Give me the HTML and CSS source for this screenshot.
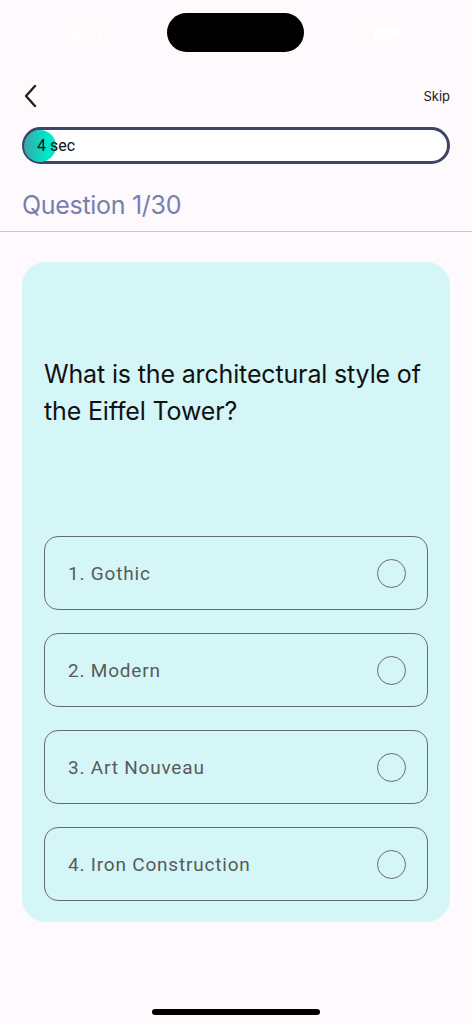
FILE: index.html
```html
<!DOCTYPE html>
<html lang="en">
<head>
  <meta charset="UTF-8">
  <meta name="viewport" content="width=device-width, initial-scale=1.0">
  <title>Quiz</title>
  <link rel="stylesheet" href="styles.css">
</head>
<body>
  <div class="status-bar">
    <span class="time">6:21</span>
    <div class="island"></div>
    <div class="status-icons">
      <svg width="16" height="12" viewBox="0 0 16 12"><path d="M1 4.5a10 10 0 0 1 14 0M3.5 7a6.5 6.5 0 0 1 9 0M6 9.5a3 3 0 0 1 4 0" fill="none" stroke="#fff" stroke-width="1.6" stroke-linecap="round"/></svg>
      <span class="battery"></span>
    </div>
  </div>

  <div class="top-bar">
    <svg class="back" width="16" height="24" viewBox="0 0 16 24"><path d="M12 2L3 12l9 10" fill="none" stroke="#222" stroke-width="2.4" stroke-linecap="round" stroke-linejoin="round"/></svg>
    <span class="skip">Skip</span>
  </div>

  <div class="timer">
    <div class="timer-dot"></div>
    <span class="timer-text">4 sec</span>
  </div>

  <h2 class="counter">Question 1/30</h2>
  <hr class="divider">

  <div class="card">
    <p class="question">What is the architectural style of the Eiffel Tower?</p>
    <div class="options">
      <div class="option"><span>1. Gothic</span><span class="radio"></span></div>
      <div class="option"><span>2. Modern</span><span class="radio"></span></div>
      <div class="option"><span>3. Art Nouveau</span><span class="radio"></span></div>
      <div class="option"><span>4. Iron Construction</span><span class="radio"></span></div>
    </div>
  </div>

  <div class="home-bar"></div>
</body>
</html>
```
FILE: styles.css
```css
html, body {
  margin: 0;
  padding: 0;
  background: #fdf9fd;
  font-family: Inter, 'Noto Sans', sans-serif;
}
body {
  width: 472px;
  height: 1024px;
  position: relative;
  overflow: hidden;
}
.status-bar {
  height: 66px;
  display: flex;
  align-items: center;
  justify-content: space-between;
  padding: 0 72px 0 70px;
  box-sizing: border-box;
}
.time {
  color: #fff;
  font-size: 16px;
  font-weight: 600;
  width: 60px;
}
.island {
  width: 137px;
  height: 39px;
  background: #000;
  border-radius: 20px;
  margin-top: -1px;
}
.status-icons {
  display: flex;
  align-items: center;
  gap: 6px;
  width: 60px;
  justify-content: flex-end;
}
.battery {
  width: 26px;
  height: 12px;
  border-radius: 4px;
  background: #fff;
}
.top-bar {
  display: flex;
  justify-content: space-between;
  align-items: center;
  padding: 0 22px 0 23px;
  height: 60px;
}
.back {
  display: block;
}
.skip {
  font-size: 13px;
  color: #222;
}
.timer {
  margin: 1px 22px 0 22px;
  height: 37px;
  border: 3px solid #3c4468;
  border-radius: 20px;
  background: #fff;
  box-sizing: border-box;
  display: flex;
  align-items: center;
  position: relative;
}
.timer-dot {
  width: 32px;
  height: 32px;
  border-radius: 50%;
  background: linear-gradient(90deg, #3aa4a8, #00e8c8 70%);
  margin-left: -1px;
}
.timer-text {
  position: absolute;
  left: 12px;
  font-size: 16px;
  font-family: Roboto, sans-serif;
  color: #111;
}
.counter {
  margin: 26px 0 0 22px;
  font-size: 25px;
  font-weight: 400;
  color: #7680ae;
  line-height: 30px;
  letter-spacing: -0.3px;
}
.divider {
  border: none;
  border-top: 1.5px solid #c9c5cc;
  margin: 11px 0 0 0;
}
.card {
  margin: 30px 22px 0 22px;
  background: #d4f6f6;
  border-radius: 24px;
  padding: 94px 22px 21px 22px;
  height: 660px;
  box-sizing: border-box;
}
.question {
  margin: 0;
  font-size: 25px;
  line-height: 37px;
  color: #111;
  letter-spacing: -0.15px;
  height: 180px;
}
.options {
  display: flex;
  flex-direction: column;
  gap: 23px;
}
.option {
  height: 74px;
  border: 1.3px solid #6a6d6f;
  border-radius: 14px;
  box-sizing: border-box;
  display: flex;
  justify-content: space-between;
  align-items: center;
  padding: 0 21px 0 23px;
  font-family: Roboto, sans-serif;
  font-size: 19px;
  color: #5a5a5a;
  letter-spacing: 0.8px;
}
.radio {
  width: 27px;
  height: 27px;
  border: 1.3px solid #6a6d6f;
  border-radius: 50%;
}
.home-bar {
  position: absolute;
  left: 152px;
  bottom: 9px;
  width: 168px;
  height: 6px;
  border-radius: 3px;
  background: #000;
}
```
